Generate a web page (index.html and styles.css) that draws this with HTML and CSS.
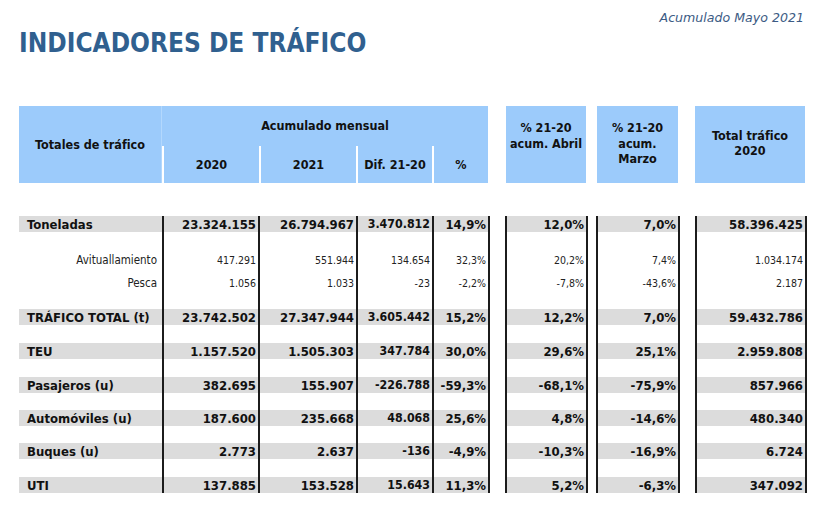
FILE: index.html
```html
<!DOCTYPE html>
<html lang="es">
<head>
<meta charset="utf-8">
<title>Indicadores de tráfico</title>
<link rel="stylesheet" href="styles.css">
</head>
<body>
<div class="page">
  <div class="period">Acumulado Mayo 2021</div>
  <h1 class="title">INDICADORES DE TRÁFICO</h1>

  <div class="head">
    <div class="h h-label">Totales de tráfico</div>
    <div class="h h-acum">Acumulado mensual</div>
    <div class="h h-sub h-2020">2020</div>
    <div class="h h-sub h-2021">2021</div>
    <div class="h h-sub h-dif">Dif. 21-20</div>
    <div class="h h-sub h-pct">%</div>
    <div class="h h-abril">% 21-20<br>acum. Abril</div>
    <div class="h h-marzo">% 21-20<br>acum.<br>Marzo</div>
    <div class="h h-total">Total tráfico<br>2020</div>
  </div>

  <div class="body">
    <div class="row main">
      <div class="c lab">Toneladas</div>
      <div class="c n bl">23.324.155</div><div class="c n bl">26.794.967</div><div class="c n bl s">3.470.812</div><div class="c n bl br">14,9%</div>
      <div class="gap"></div><div class="c n bl br">12,0%</div><div class="gap"></div><div class="c n bl br">7,0%</div><div class="gap"></div><div class="c n bl br">58.396.425</div>
    </div>
    <div class="row sp sp16"><div></div><div class="bl"></div><div class="bl"></div><div class="bl"></div><div class="bl br"></div><div></div><div class="bl br"></div><div></div><div class="bl br"></div><div></div><div class="bl br"></div></div>
    <div class="row sub">
      <div class="c lab r">Avituallamiento</div>
      <div class="c n bl">417.291</div><div class="c n bl">551.944</div><div class="c n bl">134.654</div><div class="c n bl br">32,3%</div>
      <div class="gap"></div><div class="c n bl br">20,2%</div><div class="gap"></div><div class="c n bl br">7,4%</div><div class="gap"></div><div class="c n bl br">1.034.174</div>
    </div>
    <div class="row sub">
      <div class="c lab r">Pesca</div>
      <div class="c n bl">1.056</div><div class="c n bl">1.033</div><div class="c n bl">-23</div><div class="c n bl br">-2,2%</div>
      <div class="gap"></div><div class="c n bl br">-7,8%</div><div class="gap"></div><div class="c n bl br">-43,6%</div><div class="gap"></div><div class="c n bl br">2.187</div>
    </div>
    <div class="row sp sp15"><div></div><div class="bl"></div><div class="bl"></div><div class="bl"></div><div class="bl br"></div><div></div><div class="bl br"></div><div></div><div class="bl br"></div><div></div><div class="bl br"></div></div>
    <div class="row main">
      <div class="c lab">TRÁFICO TOTAL (t)</div>
      <div class="c n bl">23.742.502</div><div class="c n bl">27.347.944</div><div class="c n bl s">3.605.442</div><div class="c n bl br">15,2%</div>
      <div class="gap"></div><div class="c n bl br">12,2%</div><div class="gap"></div><div class="c n bl br">7,0%</div><div class="gap"></div><div class="c n bl br">59.432.786</div>
    </div>
    <div class="row sp sp18"><div></div><div class="bl"></div><div class="bl"></div><div class="bl"></div><div class="bl br"></div><div></div><div class="bl br"></div><div></div><div class="bl br"></div><div></div><div class="bl br"></div></div>
    <div class="row main">
      <div class="c lab">TEU</div>
      <div class="c n bl">1.157.520</div><div class="c n bl">1.505.303</div><div class="c n bl s">347.784</div><div class="c n bl br">30,0%</div>
      <div class="gap"></div><div class="c n bl br">29,6%</div><div class="gap"></div><div class="c n bl br">25,1%</div><div class="gap"></div><div class="c n bl br">2.959.808</div>
    </div>
    <div class="row sp sp18"><div></div><div class="bl"></div><div class="bl"></div><div class="bl"></div><div class="bl br"></div><div></div><div class="bl br"></div><div></div><div class="bl br"></div><div></div><div class="bl br"></div></div>
    <div class="row main">
      <div class="c lab">Pasajeros (u)</div>
      <div class="c n bl">382.695</div><div class="c n bl">155.907</div><div class="c n bl s">-226.788</div><div class="c n bl br">-59,3%</div>
      <div class="gap"></div><div class="c n bl br">-68,1%</div><div class="gap"></div><div class="c n bl br">-75,9%</div><div class="gap"></div><div class="c n bl br">857.966</div>
    </div>
    <div class="row sp sp17"><div></div><div class="bl"></div><div class="bl"></div><div class="bl"></div><div class="bl br"></div><div></div><div class="bl br"></div><div></div><div class="bl br"></div><div></div><div class="bl br"></div></div>
    <div class="row main">
      <div class="c lab">Automóviles (u)</div>
      <div class="c n bl">187.600</div><div class="c n bl">235.668</div><div class="c n bl s">48.068</div><div class="c n bl br">25,6%</div>
      <div class="gap"></div><div class="c n bl br">4,8%</div><div class="gap"></div><div class="c n bl br">-14,6%</div><div class="gap"></div><div class="c n bl br">480.340</div>
    </div>
    <div class="row sp sp17"><div></div><div class="bl"></div><div class="bl"></div><div class="bl"></div><div class="bl br"></div><div></div><div class="bl br"></div><div></div><div class="bl br"></div><div></div><div class="bl br"></div></div>
    <div class="row main">
      <div class="c lab">Buques (u)</div>
      <div class="c n bl">2.773</div><div class="c n bl">2.637</div><div class="c n bl s">-136</div><div class="c n bl br">-4,9%</div>
      <div class="gap"></div><div class="c n bl br">-10,3%</div><div class="gap"></div><div class="c n bl br">-16,9%</div><div class="gap"></div><div class="c n bl br">6.724</div>
    </div>
    <div class="row sp sp18"><div></div><div class="bl"></div><div class="bl"></div><div class="bl"></div><div class="bl br"></div><div></div><div class="bl br"></div><div></div><div class="bl br"></div><div></div><div class="bl br"></div></div>
    <div class="row main">
      <div class="c lab">UTI</div>
      <div class="c n bl">137.885</div><div class="c n bl">153.528</div><div class="c n bl s">15.643</div><div class="c n bl br">11,3%</div>
      <div class="gap"></div><div class="c n bl br">5,2%</div><div class="gap"></div><div class="c n bl br">-6,3%</div><div class="gap"></div><div class="c n bl br">347.092</div>
    </div>
  </div>
</div>
</body>
</html>
```

FILE: styles.css
```css
* { box-sizing: border-box; }

html, body {
  margin: 0;
  padding: 0;
  background: #ffffff;
}

body {
  font-family: "DejaVu Sans Condensed", "DejaVu Sans", sans-serif;
  font-stretch: condensed;
  color: #111111;
  width: 824px;
  height: 514px;
  overflow: hidden;
}

.page {
  padding: 8px 0 0 19px;
}

.period {
  height: 18px;
  line-height: 20px;
  padding-right: 20px;
  text-align: right;
  font-family: "DejaVu Sans", sans-serif;
  font-stretch: normal;
  font-style: italic;
  font-size: 12.6px;
  color: #3c5b84;
}

.title {
  margin: 0;
  height: 34px;
  line-height: 34px;
  font-size: 26px;
  font-weight: bold;
  color: #30608f;
}

/* ---------- header ---------- */
.head {
  margin-top: 46px;
  display: grid;
  grid-template-columns: 143px 97px 97px 76px 56px 18px 80px 11px 81px 17px 110px;
  grid-template-rows: 40px 37px;
  font-size: 12.5px;
  font-weight: bold;
  line-height: 15.5px;
  color: #111111;
}

.h {
  background: #9ccbfb;
  display: flex;
  align-items: center;
  justify-content: center;
  text-align: center;
}

.h-label {
  grid-column: 1;
  grid-row: 1 / 3;
  border-right: 1px solid #b3d8fd;
}

.h-acum { grid-column: 2 / 6; grid-row: 1; }

.h-sub { grid-row: 2; border-left: 2px solid #ffffff; }
.h-2020 { grid-column: 2; }
.h-2021 { grid-column: 3; }
.h-dif { grid-column: 4; }
.h-pct { grid-column: 5; }

.h-abril {
  grid-column: 7;
  grid-row: 1 / 3;
  align-items: flex-start;
  padding-top: 14px;
}
.h-marzo { grid-column: 9; grid-row: 1 / 3; padding-bottom: 2px; }
.h-total { grid-column: 11; grid-row: 1 / 3; padding-bottom: 3px; }

/* ---------- body ---------- */
.body {
  margin-top: 33px;
}

.row {
  display: grid;
  grid-template-columns: 143px 96px 98px 76px 58px 15px 83px 8px 84px 15px 112px;
}

.main { height: 16px; }
.sub { height: 23px; }
.sp16 { height: 16px; }
.sp15 { height: 15px; }
.sp17 { height: 17px; }
.sp18 { height: 18px; }

.c {
  display: flex;
  align-items: center;
  white-space: nowrap;
}

.main .c {
  background: #dcdcdc;
  font-weight: bold;
  font-size: 13px;
}

.main .c.s { font-size: 12.3px; }

.sub .c {
  font-size: 10.5px;
  color: #222222;
}

.lab {
  padding-left: 8px;
}

.lab.r {
  justify-content: flex-end;
  padding-left: 0;
  padding-right: 5px;
}

.sub .c.lab.r { font-size: 11.5px; }

.n {
  justify-content: flex-end;
  padding-right: 2px;
}

.bl { border-left: 2px solid #1c1c1c; }
.br { border-right: 2px solid #1c1c1c; }
```
